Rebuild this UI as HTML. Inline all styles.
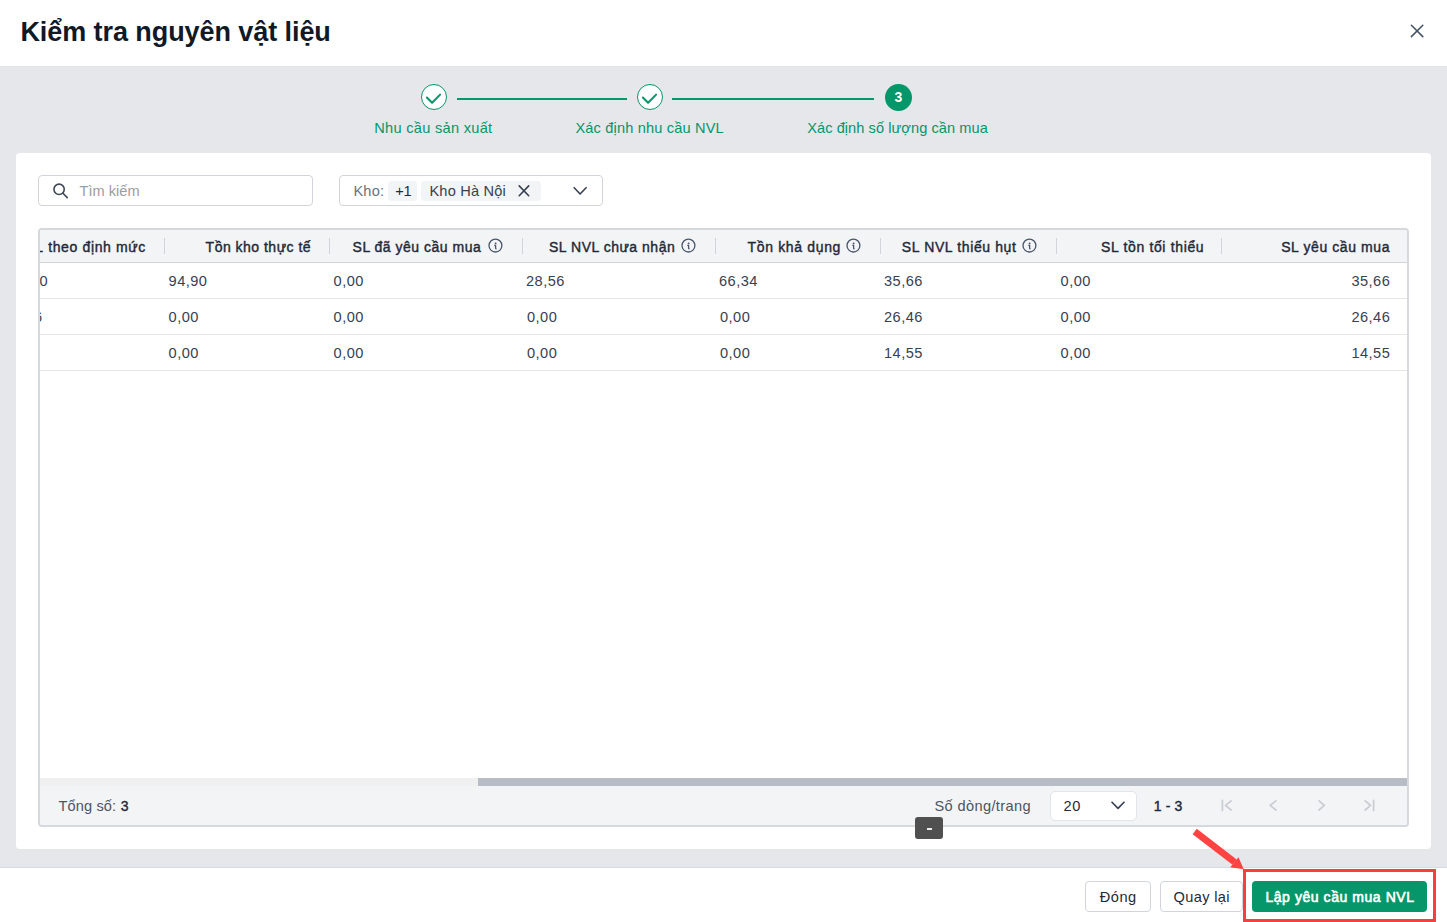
<!DOCTYPE html>
<html><head><meta charset="utf-8">
<style>
*{box-sizing:border-box;margin:0;padding:0}
html,body{width:1447px;height:922px;overflow:hidden;background:#fff;font-family:"Liberation Sans",sans-serif}
.a{position:absolute}
.t{position:absolute;white-space:nowrap;line-height:1}
</style></head>
<body>
<!-- header -->
<div class="t" style="top:19px;font-size:27px;letter-spacing:-0.07px;font-weight:bold;left:20.40px;color:#111827">Kiểm tra nguyên vật liệu</div>
<svg class="a" style="left:1409px;top:23px" width="16" height="16" viewBox="0 0 16 16"><path d="M2.4 2.3L13.8 13.6M13.8 2.3L2.4 13.6" stroke="#475569" stroke-width="1.6" stroke-linecap="round"/></svg>
<!-- gray body -->
<div class="a" style="left:0;top:66px;width:1447px;height:802px;background:#e5e7eb;border-top:1px solid #e1e3e7;border-bottom:1px solid #d8dce0"></div>
<!-- stepper -->
<div class="a" style="left:421px;top:84px;width:26px;height:26px;border-radius:50%;border:1px solid #059669;background:#fff"></div>
<svg class="a" style="left:421px;top:84px" width="26" height="26" viewBox="0 0 26 26"><path d="M5.9 13.5L11.1 18.8L19.1 10.6" fill="none" stroke="#059669" stroke-width="2" stroke-linecap="round" stroke-linejoin="round"/></svg>
<div class="a" style="left:457px;top:98px;width:170px;height:2px;background:#059669"></div>
<div class="a" style="left:637px;top:84px;width:26px;height:26px;border-radius:50%;border:1px solid #059669;background:#fff"></div>
<svg class="a" style="left:637px;top:84px" width="26" height="26" viewBox="0 0 26 26"><path d="M5.9 13.5L11.1 18.8L19.1 10.6" fill="none" stroke="#059669" stroke-width="2" stroke-linecap="round" stroke-linejoin="round"/></svg>
<div class="a" style="left:672px;top:98px;width:202px;height:2px;background:#059669"></div>
<div class="a" style="left:884.8px;top:83.8px;width:26.8px;height:26.8px;border-radius:50%;background:#059669"></div>
<div class="t" style="left:885px;top:90px;width:27px;text-align:center;font-size:14px;font-weight:bold;color:#fff">3</div>
<div class="t" style="top:121px;font-size:14.6px;letter-spacing:0.29px;left:374.20px;color:#059669">Nhu cầu sản xuất</div><div class="t" style="top:121px;font-size:14.6px;letter-spacing:0.16px;left:575.40px;color:#059669">Xác định nhu cầu NVL</div><div class="t" style="top:121px;font-size:14.6px;letter-spacing:0.06px;left:807.20px;color:#059669">Xác định số lượng cần mua</div>
<!-- card -->
<div class="a" style="left:16px;top:153px;width:1415px;height:696px;background:#fff;border-radius:4px"></div>
<!-- search -->
<div class="a" style="left:38px;top:175px;width:275px;height:31px;border:1px solid #d1d5db;border-radius:4px"></div>
<svg class="a" style="left:52px;top:182px" width="18" height="18" viewBox="0 0 18 18"><circle cx="7.1" cy="7.3" r="5.15" fill="none" stroke="#3f4856" stroke-width="1.6"/><path d="M11 11.3L15.2 15.6" stroke="#3f4856" stroke-width="1.6" stroke-linecap="round"/></svg>
<div class="t" style="top:184px;font-size:14.6px;letter-spacing:0.01px;left:79.60px;color:#9b9da1">Tìm kiếm</div>
<!-- kho select -->
<div class="a" style="left:339px;top:175px;width:264px;height:31px;border:1px solid #d1d5db;border-radius:4px"></div>
<div class="t" style="top:184px;font-size:14.6px;letter-spacing:0.23px;left:353.40px;color:#6b7280">Kho:</div>
<div class="a" style="left:388px;top:181px;width:29px;height:20px;background:#f3f4f6;border-radius:4px"></div>
<div class="t" style="top:184px;font-size:14.6px;letter-spacing:-0.30px;left:395.20px;color:#1f2937">+1</div>
<div class="a" style="left:421px;top:181px;width:120px;height:20px;background:#f3f4f6;border-radius:4px"></div>
<div class="t" style="top:184px;font-size:14.6px;letter-spacing:0.20px;left:429.40px;color:#374151">Kho Hà Nội</div>
<svg class="a" style="left:516px;top:183px" width="15" height="15" viewBox="0 0 15 15"><path d="M3.2 2.9L12.7 12.7M12.7 2.9L3.2 12.7" stroke="#374151" stroke-width="1.6" stroke-linecap="round"/></svg>
<svg class="a" style="left:572px;top:184px" width="16" height="12" viewBox="0 0 16 12"><path d="M2.2 3.7L8.1 10L14.1 3.7" fill="none" stroke="#374151" stroke-width="1.6" stroke-linecap="round" stroke-linejoin="round"/></svg>
<!-- table frame -->
<div class="a" style="left:38px;top:228px;width:1371px;height:599px;border:2px solid #d5d8dd;border-radius:4px;background:#fff"></div>
<div class="a" style="left:40px;top:230px;width:1367px;height:32px;background:#f3f4f6;border-radius:3px 3px 0 0"></div>
<div class="a" style="left:40px;top:262px;width:1367px;height:1px;background:#d1d5db"></div>
<div class="a" style="left:40px;top:298px;width:1367px;height:1px;background:#e5e7eb"></div>
<div class="a" style="left:40px;top:334px;width:1367px;height:1px;background:#e5e7eb"></div>
<div class="a" style="left:40px;top:370px;width:1367px;height:1px;background:#e5e7eb"></div>
<div class="a" style="left:164px;top:238px;width:1px;height:16px;background:#d1d5db"></div>
<div class="a" style="left:329px;top:238px;width:1px;height:16px;background:#d1d5db"></div>
<div class="a" style="left:522px;top:238px;width:1px;height:16px;background:#d1d5db"></div>
<div class="a" style="left:715px;top:238px;width:1px;height:16px;background:#d1d5db"></div>
<div class="a" style="left:880px;top:238px;width:1px;height:16px;background:#d1d5db"></div>
<div class="a" style="left:1056px;top:238px;width:1px;height:16px;background:#d1d5db"></div>
<div class="a" style="left:1221px;top:238px;width:1px;height:16px;background:#d1d5db"></div>
<div class="a" style="left:40px;top:230px;width:124px;height:32px;overflow:hidden"><div class="a" style="left:-40px;top:-230px;width:1447px;height:922px"><div class="t" style="top:240px;font-size:14px;letter-spacing:0.63px;-webkit-text-stroke:0.4px #1f2937;left:48.20px;color:#1f2937">theo định mức</div><div class="t" style="top:240px;font-size:14px;-webkit-text-stroke:0.4px #1f2937;right:1404.00px;color:#1f2937">L</div></div></div>
<div class="t" style="top:240px;font-size:14px;letter-spacing:0.49px;-webkit-text-stroke:0.4px #1f2937;left:205.60px;color:#1f2937">Tồn kho thực tế</div><div class="t" style="top:240px;font-size:14px;letter-spacing:0.50px;-webkit-text-stroke:0.4px #1f2937;left:352.60px;color:#1f2937">SL đã yêu cầu mua</div><div class="t" style="top:240px;font-size:14px;letter-spacing:0.51px;-webkit-text-stroke:0.4px #1f2937;left:549.00px;color:#1f2937">SL NVL chưa nhận</div><div class="t" style="top:240px;font-size:14px;letter-spacing:0.65px;-webkit-text-stroke:0.4px #1f2937;left:747.60px;color:#1f2937">Tồn khả dụng</div><div class="t" style="top:240px;font-size:14px;letter-spacing:0.62px;-webkit-text-stroke:0.4px #1f2937;left:901.80px;color:#1f2937">SL NVL thiếu hụt</div><div class="t" style="top:240px;font-size:14px;letter-spacing:0.65px;-webkit-text-stroke:0.4px #1f2937;left:1101.00px;color:#1f2937">SL tồn tối thiểu</div><div class="t" style="top:240px;font-size:14px;letter-spacing:0.59px;-webkit-text-stroke:0.4px #1f2937;left:1281.20px;color:#1f2937">SL yêu cầu mua</div><svg class="a" style="left:487.7px;top:238px" width="15" height="15" viewBox="0 0 15 15"><circle cx="7.45" cy="7.55" r="6.45" fill="none" stroke="#475569" stroke-width="1.3"/><circle cx="7.6" cy="5.4" r="0.95" fill="#475569"/><path d="M6.3 7.35H7.6V10.3Q7.6 10.95 8.6 10.95" fill="none" stroke="#475569" stroke-width="1.3" stroke-linecap="butt" stroke-linejoin="round"/></svg><svg class="a" style="left:680.8px;top:238px" width="15" height="15" viewBox="0 0 15 15"><circle cx="7.45" cy="7.55" r="6.45" fill="none" stroke="#475569" stroke-width="1.3"/><circle cx="7.6" cy="5.4" r="0.95" fill="#475569"/><path d="M6.3 7.35H7.6V10.3Q7.6 10.95 8.6 10.95" fill="none" stroke="#475569" stroke-width="1.3" stroke-linecap="butt" stroke-linejoin="round"/></svg><svg class="a" style="left:845.7px;top:238px" width="15" height="15" viewBox="0 0 15 15"><circle cx="7.45" cy="7.55" r="6.45" fill="none" stroke="#475569" stroke-width="1.3"/><circle cx="7.6" cy="5.4" r="0.95" fill="#475569"/><path d="M6.3 7.35H7.6V10.3Q7.6 10.95 8.6 10.95" fill="none" stroke="#475569" stroke-width="1.3" stroke-linecap="butt" stroke-linejoin="round"/></svg><svg class="a" style="left:1022.0px;top:238px" width="15" height="15" viewBox="0 0 15 15"><circle cx="7.45" cy="7.55" r="6.45" fill="none" stroke="#475569" stroke-width="1.3"/><circle cx="7.6" cy="5.4" r="0.95" fill="#475569"/><path d="M6.3 7.35H7.6V10.3Q7.6 10.95 8.6 10.95" fill="none" stroke="#475569" stroke-width="1.3" stroke-linecap="butt" stroke-linejoin="round"/></svg><div class="a" style="left:40px;top:263px;width:124px;height:107px;overflow:hidden"><div class="a" style="left:-40px;top:-263px;width:1447px;height:922px"><div class="t" style="right:1399px;top:274px;font-size:14.6px;letter-spacing:0.45px;color:#374151">130,00</div><div class="t" style="right:1404.5px;top:310px;font-size:14.6px;letter-spacing:0.45px;color:#374151">20,46</div></div></div>
<div class="t" style="top:274px;font-size:14.6px;letter-spacing:0.45px;left:168.60px;color:#374151">94,90</div><div class="t" style="top:274px;font-size:14.6px;letter-spacing:0.45px;left:333.60px;color:#374151">0,00</div><div class="t" style="top:274px;font-size:14.6px;letter-spacing:0.45px;left:526.00px;color:#374151">28,56</div><div class="t" style="top:274px;font-size:14.6px;letter-spacing:0.45px;left:719.00px;color:#374151">66,34</div><div class="t" style="top:274px;font-size:14.6px;letter-spacing:0.45px;left:884.00px;color:#374151">35,66</div><div class="t" style="top:274px;font-size:14.6px;letter-spacing:0.45px;left:1060.60px;color:#374151">0,00</div><div class="t" style="top:274px;font-size:14.6px;letter-spacing:0.45px;right:56.80px;color:#374151">35,66</div><div class="t" style="top:310px;font-size:14.6px;letter-spacing:0.45px;left:168.60px;color:#374151">0,00</div><div class="t" style="top:310px;font-size:14.6px;letter-spacing:0.45px;left:333.60px;color:#374151">0,00</div><div class="t" style="top:310px;font-size:14.6px;letter-spacing:0.45px;left:527.00px;color:#374151">0,00</div><div class="t" style="top:310px;font-size:14.6px;letter-spacing:0.45px;left:720.00px;color:#374151">0,00</div><div class="t" style="top:310px;font-size:14.6px;letter-spacing:0.45px;left:884.00px;color:#374151">26,46</div><div class="t" style="top:310px;font-size:14.6px;letter-spacing:0.45px;left:1060.60px;color:#374151">0,00</div><div class="t" style="top:310px;font-size:14.6px;letter-spacing:0.45px;right:56.80px;color:#374151">26,46</div><div class="t" style="top:346px;font-size:14.6px;letter-spacing:0.45px;left:168.60px;color:#374151">0,00</div><div class="t" style="top:346px;font-size:14.6px;letter-spacing:0.45px;left:333.60px;color:#374151">0,00</div><div class="t" style="top:346px;font-size:14.6px;letter-spacing:0.45px;left:527.00px;color:#374151">0,00</div><div class="t" style="top:346px;font-size:14.6px;letter-spacing:0.45px;left:720.00px;color:#374151">0,00</div><div class="t" style="top:346px;font-size:14.6px;letter-spacing:0.45px;left:884.00px;color:#374151">14,55</div><div class="t" style="top:346px;font-size:14.6px;letter-spacing:0.45px;left:1060.60px;color:#374151">0,00</div><div class="t" style="top:346px;font-size:14.6px;letter-spacing:0.45px;right:56.80px;color:#374151">14,55</div>
<!-- scrollbar -->
<div class="a" style="left:40px;top:778px;width:1367px;height:8px;background:#f0f0f0"></div>
<div class="a" style="left:478px;top:778px;width:929px;height:8px;background:#b8bcc4"></div>
<!-- table footer -->
<div class="a" style="left:40px;top:786px;width:1367px;height:39px;background:#f3f4f6;border-radius:0 0 3px 3px"></div>
<div class="t" style="top:799px;font-size:14.6px;letter-spacing:0.14px;left:58.40px;color:#4b5563">Tổng số:</div><div class="t" style="top:799px;font-size:14px;-webkit-text-stroke:0.4px #1f2937;left:120.80px;color:#1f2937">3</div><div class="t" style="top:799px;font-size:14.6px;letter-spacing:0.38px;left:934.40px;color:#4b5563">Số dòng/trang</div>
<div class="a" style="left:1049.5px;top:790.5px;width:87px;height:30.5px;background:#fff;border:1px solid #e2e5e9;border-radius:5px"></div>
<div class="t" style="top:799px;font-size:14.6px;letter-spacing:0.80px;left:1063.40px;color:#1f2937">20</div>
<svg class="a" style="left:1110px;top:799px" width="16" height="12" viewBox="0 0 16 12"><path d="M2 3.2L8 9.4L14 3.2" fill="none" stroke="#374151" stroke-width="1.6" stroke-linecap="round" stroke-linejoin="round"/></svg>
<div class="t" style="top:799px;font-size:14px;letter-spacing:0.12px;-webkit-text-stroke:0.4px #1f2937;left:1153.80px;color:#1f2937">1 - 3</div>
<svg class="a" style="left:1210px;top:795px" width="180" height="20" viewBox="1210 795 180 20"><g fill="none" stroke="#c8ccd3" stroke-width="1.7" stroke-linecap="round" stroke-linejoin="round"><path d="M1222.4 800.3V810.5M1231.1 800.8L1225.5 805.4L1231.1 810"/><path d="M1275.9 800.8L1270.2 805.4L1275.9 810"/><path d="M1319 800.8L1324.3 805.4L1319 810"/><path d="M1365.2 800.8L1370.5 805.4L1365.2 810M1373.6 800.3V810.5"/></g></svg>
<!-- tooltip -->
<div class="a" style="left:915px;top:817px;width:28px;height:22px;background:#505050;border-radius:3px"></div>
<div class="a" style="left:927px;top:828px;width:5px;height:2px;background:#ececec"></div>
<!-- footer buttons -->
<div class="a" style="left:1085px;top:881px;width:66px;height:31px;border:1px solid #d1d5db;border-radius:4px;background:#fff"></div>
<div class="t" style="top:890px;font-size:14.6px;letter-spacing:0.50px;left:1099.80px;color:#1f2937">Đóng</div>
<div class="a" style="left:1160px;top:881px;width:83px;height:31px;border:1px solid #d1d5db;border-radius:4px;background:#fff"></div>
<div class="t" style="top:890px;font-size:14.6px;letter-spacing:0.34px;left:1173.60px;color:#1f2937">Quay lại</div>
<div class="a" style="left:1252px;top:881px;width:175px;height:31px;background:#059669;border-radius:4px"></div>
<div class="t" style="top:890px;font-size:14px;letter-spacing:0.56px;-webkit-text-stroke:0.6px #ffffff;left:1265.40px;color:#ffffff">Lập yêu cầu mua NVL</div>
<!-- annotation -->
<div class="a" style="left:1243px;top:869px;width:193px;height:53px;border:3px solid #f54040"></div>
<svg class="a" style="left:0;top:0" width="1447" height="922" viewBox="0 0 1447 922"><path d="M1194.7 831.5L1234.6 862.1" stroke="#ff4242" stroke-width="6.8"/><path d="M1242.8 868.5L1238.3 858.4L1231.4 866.9Z" fill="#ff4242" stroke="#ff4242" stroke-width="1.2" stroke-linejoin="miter"/></svg>
</body></html>
